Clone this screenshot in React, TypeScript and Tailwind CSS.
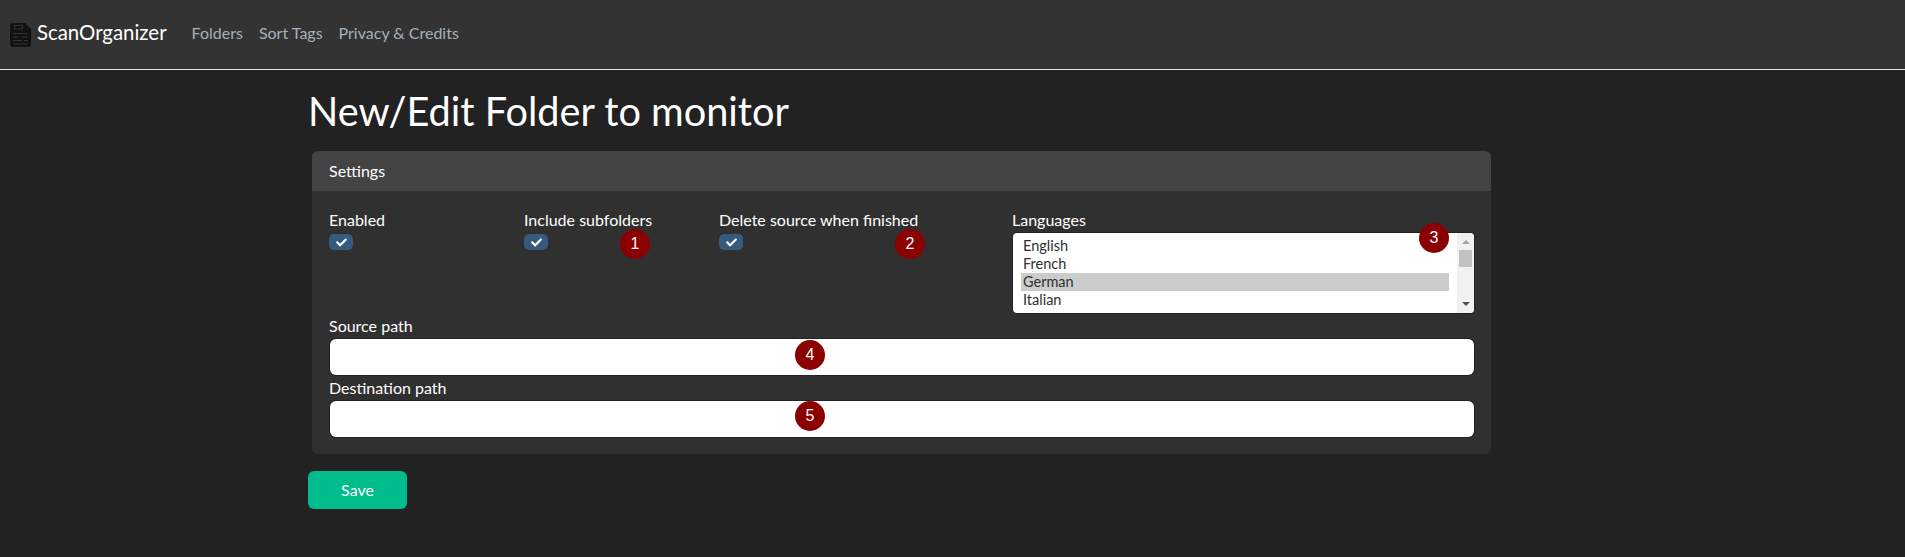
import { FaCheck } from 'react-icons/fa';

const languages = ['English', 'French', 'German', 'Italian'];

function Marker({ n, className }: { n: number; className: string }) {
  return (
    <span className={`absolute flex h-[30px] w-[30px] items-center justify-center rounded-full bg-[#8b0000] font-['Liberation_Sans',sans-serif] text-[16px] leading-none text-white ${className}`}>
      {n}
    </span>
  );
}

function Toggle() {
  return (
    <span className="mt-[3px] flex h-4 w-6 items-center justify-center rounded-[5px] bg-[#375a7f]">
      <FaCheck className="h-[11px] w-[11px] text-white" />
    </span>
  );
}

function Logo() {
  return (
    <svg viewBox="0 0 21 24" className="h-6 w-[21px]" aria-hidden="true">
      <path d="M3 0h12l6 6v15a3 3 0 0 1-3 3H3a3 3 0 0 1-3-3V3a3 3 0 0 1 3-3z" fill="#111111" />
      <path d="M4.500 2.500h8v3.500h-8z" fill="none" stroke="#333333" strokeWidth="1.200" />
      <path d="M3 10.500h15M3 14h6M11 14h7M3 17.500h9M14 17.500h4M3 21h15" stroke="#333333" strokeWidth="1.200" />
    </svg>
  );
}

export default function App() {
  return (
    <div className="min-h-[557px] bg-[#222222] font-['Lato',sans-serif] text-white">
      <nav className="flex h-[70px] items-center border-b border-[#e4e4e4] bg-[#333333] pl-[10px]">
        <Logo />
        <span className="mb-1 ml-[6px] text-[20.4px] leading-none">ScanOrganizer</span>
        <div className="mb-1 ml-[25px] flex gap-4 text-[16px] text-[#a3b1bf]">
          <a>Folders</a>
          <a>Sort Tags</a>
          <a>Privacy &amp; Credits</a>
        </div>
      </nav>

      <main className="ml-[308px] w-[1183px]">
        <h1 className="flex h-[81px] items-center text-[39.7px] font-normal leading-none">
          New/Edit Folder to monitor
        </h1>

        <section className="ml-[4px] w-[1179px] overflow-hidden rounded-[6px] bg-[#303030]">
          <div className="flex h-10 items-center bg-[#444444] px-[17px] text-[16px]">Settings</div>
          <div className="px-[17px] pb-[17px] pt-[18px] text-[16px]">
            <div className="grid grid-cols-[195px_195px_293px_1fr]">
              <div>
                <label className="mb-[2px] block leading-[22px]">Enabled</label>
                <Toggle />
              </div>
              <div className="relative">
                <label className="mb-[2px] block leading-[22px]">Include subfolders</label>
                <Toggle />
                <Marker n={1} className="left-[96px] top-[20px]" />
              </div>
              <div className="relative">
                <label className="mb-[2px] block leading-[22px]">Delete source when finished</label>
                <Toggle />
                <Marker n={2} className="left-[176px] top-[20px]" />
              </div>
              <div className="relative">
                <label className="mb-[2px] block leading-[22px]">Languages</label>
                <div className="ml-[1px] flex h-20 overflow-hidden rounded-[4px] bg-white text-[14.5px] leading-[18px] text-[#303030] ring-1 ring-[#222222]">
                  <ul className="flex-1 py-1 pl-2 pr-2">
                    {languages.map(lang => (
                      <li key={lang} className={`pl-[2px] ${lang === 'German' ? 'bg-[#cccccc]' : ''}`}>
                        {lang}
                      </li>
                    ))}
                  </ul>
                  <div className="flex w-[17px] flex-col items-center bg-[#f1f1f1]">
                    <span className="mt-[7px] h-0 w-0 border-x-[4px] border-b-[4px] border-x-transparent border-b-[#a3a3a3]" />
                    <span className="mt-[6px] h-[17px] w-[13px] bg-[#c1c1c1]" />
                    <span className="mb-[7px] mt-auto h-0 w-0 border-x-[4px] border-t-[4px] border-x-transparent border-t-[#505050]" />
                  </div>
                </div>
                <Marker n={3} className="left-[407px] top-[14px]" />
              </div>
            </div>

            <div className="relative mt-[2px]">
              <label className="mb-[2px] block leading-[22px]">Source path</label>
              <input className="ml-[1px] block h-9 w-[1144px] rounded-[6px] bg-white ring-1 ring-[#222222]" />
              <Marker n={4} className="left-[466px] top-[25px]" />
            </div>
            <div className="relative mt-[2px]">
              <label className="mb-[2px] block leading-[22px]">Destination path</label>
              <input className="ml-[1px] block h-9 w-[1144px] rounded-[6px] bg-white ring-1 ring-[#222222]" />
              <Marker n={5} className="left-[466px] top-[24px]" />
            </div>
          </div>
        </section>

        <button className="mt-[17px] h-[38px] w-[99px] rounded-[6px] bg-[#00bc8c] text-[16px] text-white">Save</button>
      </main>
    </div>
  );
}
